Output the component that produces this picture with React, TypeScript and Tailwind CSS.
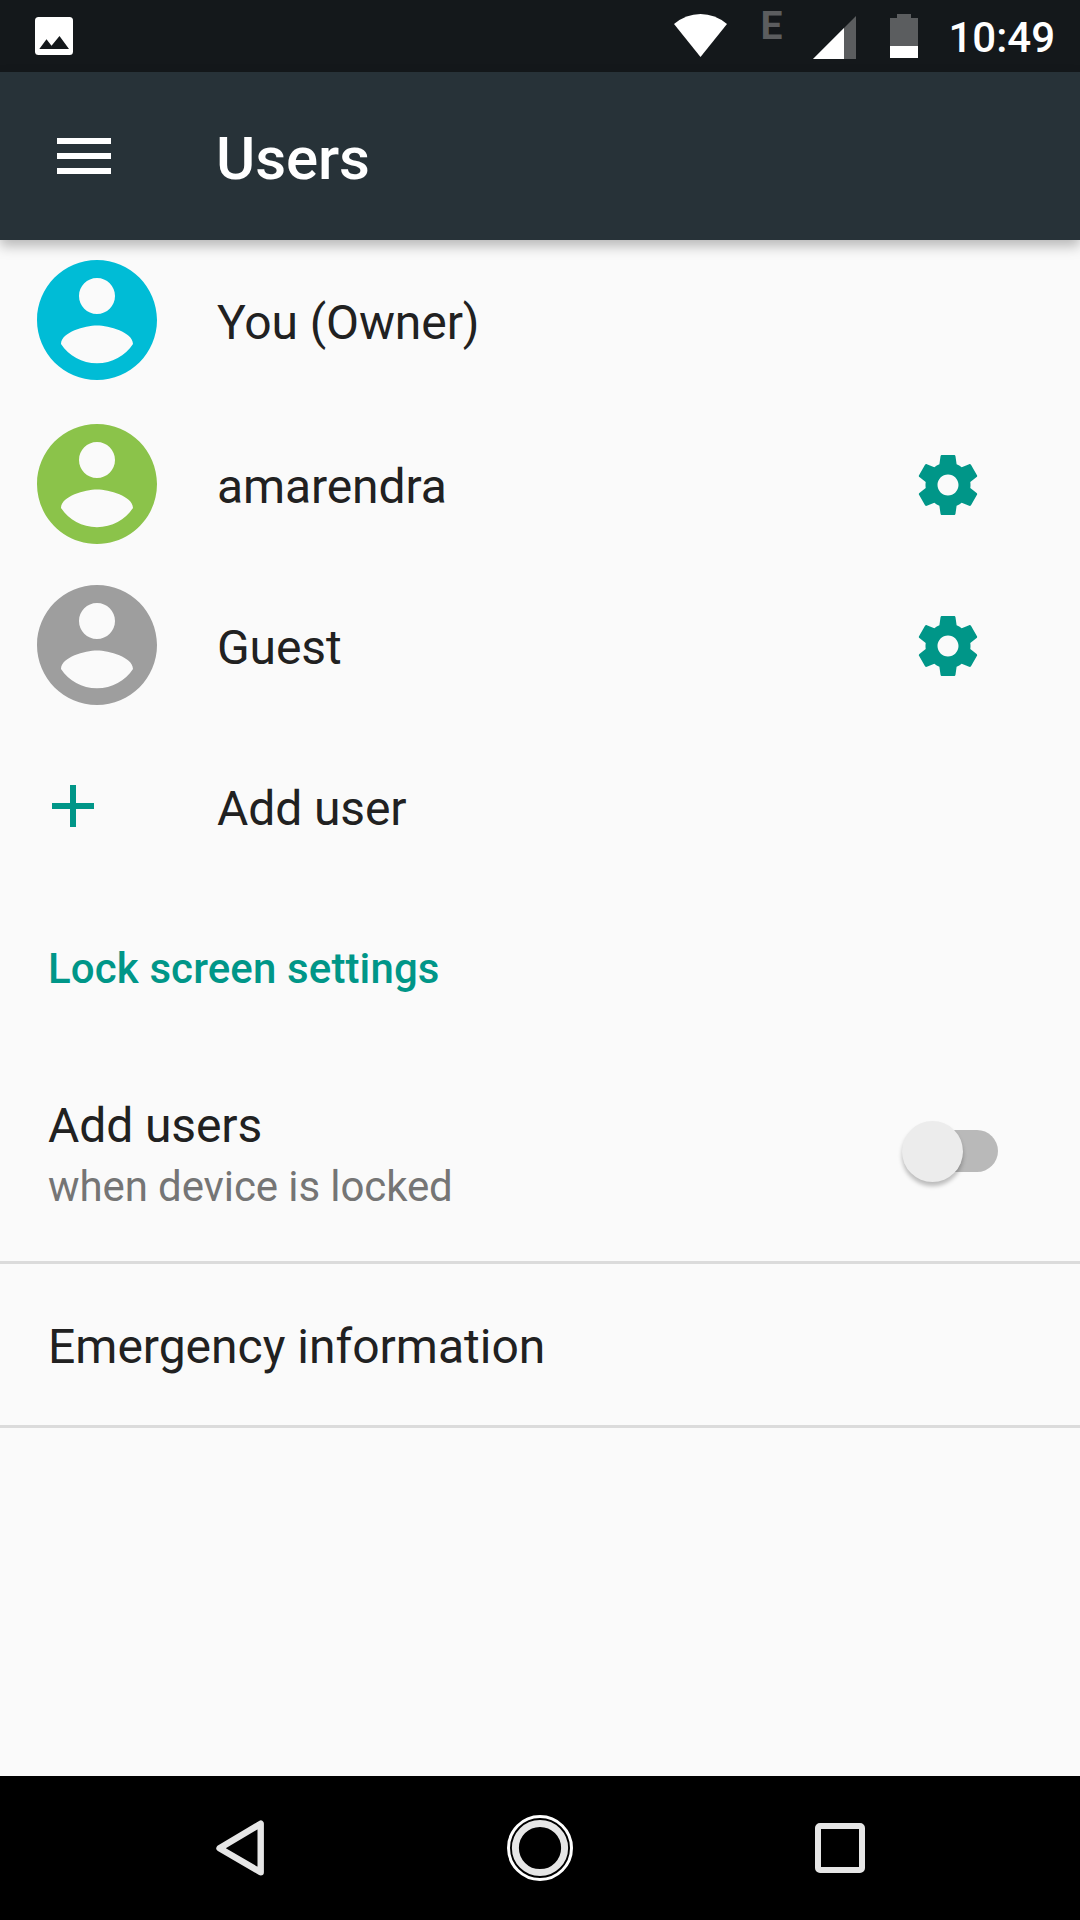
import React, { useState } from 'react';

interface AvatarProps {
  className: string;
}

const Avatar: React.FC<AvatarProps> = ({ className }) => (
  <svg viewBox="2 2 20 20" className={`w-[120px] h-[120px] ${className}`} fill="currentColor">
    <path d="M12 2C6.48 2 2 6.48 2 12s4.48 10 10 10 10-4.48 10-10S17.52 2 12 2zm0 3c1.66 0 3 1.34 3 3s-1.34 3-3 3-3-1.34-3-3 1.34-3 3-3zm0 14.2c-2.5 0-4.71-1.28-6-3.22.03-1.99 4-3.08 6-3.08 1.99 0 5.97 1.09 6 3.08-1.29 1.94-3.5 3.22-6 3.22z" />
  </svg>
);

const GearIcon = () => (
  <svg viewBox="0 0 24 24" className="w-[72px] h-[72px] text-[#009688]" fill="currentColor">
    <path d="M19.43 12.98c.04-.32.07-.64.07-.98s-.03-.66-.07-.98l2.11-1.65c.19-.15.24-.42.12-.64l-2-3.46c-.12-.22-.39-.3-.61-.22l-2.49 1c-.52-.4-1.08-.73-1.69-.98l-.38-2.65C14.46 2.18 14.25 2 14 2h-4c-.25 0-.46.18-.49.42l-.38 2.65c-.61.25-1.17.59-1.69.98l-2.49-1c-.23-.09-.49 0-.61.22l-2 3.46c-.13.22-.07.49.12.64l2.11 1.65c-.04.32-.07.65-.07.98s.03.66.07.98l-2.11 1.65c-.19.15-.24.42-.12.64l2 3.46c.12.22.39.3.61.22l2.49-1c.52.4 1.08.73 1.69.98l.38 2.65c.03.24.24.42.49.42h4c.25 0 .46-.18.49-.42l.38-2.65c.61-.25 1.17-.59 1.69-.98l2.49 1c.23.09.49 0 .61-.22l2-3.46c.12-.22.07-.49-.12-.64l-2.11-1.65zM12 15.5c-1.93 0-3.5-1.57-3.5-3.5s1.57-3.5 3.5-3.5 3.5 1.57 3.5 3.5-1.57 3.5-3.5 3.5z" />
  </svg>
);

const users = [
  { name: 'You (Owner)', color: 'text-[#00bcd6]', spacing: 'mb-1', editable: false },
  { name: 'amarendra', color: 'text-[#8bc34a]', spacing: 'mb-px', editable: true },
  { name: 'Guest', color: 'text-[#9e9e9e]', spacing: 'mb-px', editable: true },
];

const StatusBar = () => (
  <div className="flex h-[72px] items-start bg-[#14181b] pl-[35px]">
    <svg viewBox="0 0 38 38" className="mt-[17px] w-[38px] h-[38px]">
      <rect width="38" height="38" rx="3.5" fill="#fff" />
      <path d="M4.3 32 11.5 22.3 16.5 28.7 24.5 19 34 32z" fill="#14181b" />
    </svg>

    <div className="ml-auto flex items-start pr-[25px] tracking-normal">
      {/* Wifi */}
      <svg viewBox="0 0 54 44" className="mt-[14px] w-[54px] h-[44px]">
        <path d="M0 10Q12 0 26.5 0T53 10L26.5 43z" fill="#fff" />
      </svg>
      <span className="ml-[32px] mt-[3px] w-[26px] text-[39px] leading-[46px] font-bold text-[#5b5d5f]">E</span>
      {/* Mobile signal */}
      <svg viewBox="0 0 43 43" className="ml-[27px] mt-[16px] w-[43px] h-[43px]">
        <path d="M43 0V43H0z" fill="#5b5d5f" />
        <path d="M31 12V43H0z" fill="#fff" />
      </svg>
      {/* Battery */}
      <svg viewBox="0 0 28 44" className="ml-[34px] mt-[14px] w-[28px] h-[44px]">
        <path d="M7 0H21V4H28V32H0V4H7z" fill="#5b5d5f" />
        <path d="M0 32H28V44H0z" fill="#fff" />
      </svg>
      <span className="ml-[30px] mt-[13px] text-[42px] leading-[49px] font-medium text-white">10:49</span>
    </div>
  </div>
);

const NavigationBar = () => (
  <nav className="flex h-36 items-center justify-between bg-black px-[210px]">
    <svg viewBox="0 0 60 60" className="w-[60px] h-[60px]" fill="none">
      <path d="M9.5 30.3 50.7 5.7V54.3z" stroke="#e6e6e6" strokeWidth="6.4" strokeLinejoin="round" />
    </svg>
    <svg viewBox="0 0 66 66" className="w-[66px] h-[66px]" fill="none">
      <circle cx="33" cy="33" r="31.5" stroke="#fff" strokeWidth="3" />
      <circle cx="33" cy="33" r="24.6" stroke="#e6e6e6" strokeWidth="7" />
    </svg>
    <svg viewBox="0 0 60 60" className="w-[60px] h-[60px]" fill="none">
      <rect x="8" y="8" width="44" height="44" rx="2" stroke="#e6e6e6" strokeWidth="6" />
    </svg>
  </nav>
);

export default function App() {
  const [addWhenLocked, setAddWhenLocked] = useState(false);

  return (
    <div className="flex h-[1920px] w-[1080px] flex-col overflow-hidden bg-[#fafafa] font-[Roboto,sans-serif] text-[48px] leading-[56px] tracking-[-0.1px] text-[#212121]">
      <StatusBar />

      <header className="flex h-[168px] items-center bg-[#273238] pl-[57px] shadow-[0_6px_12px_rgba(0,0,0,0.27)]">
        <button className="flex flex-col gap-[9px]" aria-label="Menu">
          <span className="h-1.5 w-[54px] bg-white" />
          <span className="h-1.5 w-[54px] bg-white" />
          <span className="h-1.5 w-[54px] bg-white" />
        </button>
        <h1 className="ml-[105px] pt-1.5 text-[60px] leading-[70px] font-medium text-white">Users</h1>
      </header>

      <main className="flex-1">
        {users.map((user) => (
          <div key={user.name} className={`flex h-40 items-center pl-[37px] pr-[96px] ${user.spacing}`}>
            <Avatar className={user.color} />
            <span className="ml-[60px] flex-1 pt-1.5">{user.name}</span>
            {user.editable && (
              <button className="pt-0.5" aria-label="User settings">
                <GearIcon />
              </button>
            )}
          </div>
        ))}

        <div className="flex h-40 items-center pl-[52px]">
          <svg viewBox="0 0 42 42" className="w-[42px] h-[42px]">
            <path d="M18 0H24V18H42V24H24V42H18V24H0V18H18z" fill="#009688" />
          </svg>
          <span className="ml-[123px] pt-1.5">Add user</span>
        </div>

        {/* Lock screen section */}
        <h2 className="px-12 pt-[58px] text-[42px] leading-[49px] font-medium tracking-[0.12px] text-[#009688]">
          Lock screen settings
        </h2>

        <div className="mt-[105px] flex h-[166px] justify-between border-b-[3px] border-[#dbdbdb] pl-12 pr-[82px]">
          <div>
            <p>Add users</p>
            <p className="mt-2 text-[42px] leading-[49px] text-[#757575]">when device is locked</p>
          </div>
          <button
            role="switch"
            aria-checked={addWhenLocked}
            onClick={() => setAddWhenLocked(!addWhenLocked)}
            className="mt-[23px] flex h-[60px] w-[96px] items-center"
          >
            <span className="z-10 h-[61px] w-[61px] shrink-0 rounded-full bg-[#ececec] shadow-[0_4px_4px_rgba(0,0,0,0.25)]" />
            <span className="-ml-[45px] h-[42px] w-[80px] shrink-0 rounded-full bg-[#b9b9b9]" />
          </button>
        </div>

        <div className="flex h-[164px] items-center border-b-[3px] border-[#dbdbdb] pl-12 pt-1 tracking-normal">
          Emergency information
        </div>
      </main>

      <NavigationBar />
    </div>
  );
}
